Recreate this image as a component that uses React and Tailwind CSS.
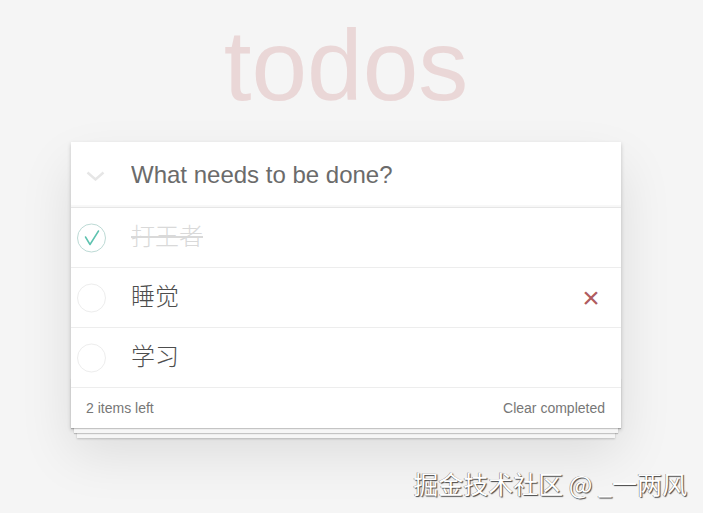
import { useState } from 'react';

const initialTodos = [
    { id: 1, title: '打王者', completed: true },
    { id: 2, title: '睡觉', completed: false },
    { id: 3, title: '学习', completed: false },
];

const Toggle = ({ checked }) => (
    <svg width="40" height="40" viewBox="0 0 40 40" className="shrink-0">
        <circle cx="20.5" cy="20" r="14" fill="none" stroke={checked ? '#bddad5' : '#ededed'} strokeWidth="1" />
        {checked && (
            <path d="M14.5 19 L19 26.5 L27.5 13" fill="none" stroke="#5dc2af" strokeWidth="1.5" strokeLinecap="round" strokeLinejoin="round" />
        )}
    </svg>
);

const TodoItem = ({ todo, hovered, onHover, onToggle, onDestroy }) => (
    <li
        className="relative flex items-center h-[60px] border-b border-[#ededed]"
        onMouseEnter={() => onHover(todo.id)}
    >
        <button type="button" onClick={() => onToggle(todo.id)} className="ml-0 w-[40px] h-[40px] flex items-center">
            <Toggle checked={todo.completed} />
        </button>
        <label
            className={
                'pl-[20px] pr-[15px] text-[24px] leading-[1.2] font-light ' +
                (todo.completed ? 'text-[#d9d9d9] line-through' : 'text-[#4d4d4d]')
            }
        >
            {todo.title}
        </label>
        {hovered && (
            <button
                type="button"
                onClick={() => onDestroy(todo.id)}
                className="absolute right-[10px] top-[10px] w-[40px] h-[40px] flex items-center justify-center text-[30px] leading-none text-[#af5b5e]"
            >
                ×
            </button>
        )}
    </li>
);

export default function App() {
    const [todos, setTodos] = useState(initialTodos);
    const [hoverId, setHoverId] = useState(2);

    const left = todos.filter((t) => !t.completed).length;

    const toggle = (id) => setTodos(todos.map((t) => (t.id === id ? { ...t, completed: !t.completed } : t)));
    const destroy = (id) => setTodos(todos.filter((t) => t.id !== id));

    return (
        <div className="relative min-h-screen h-[513px] overflow-hidden bg-[#f5f5f5] font-['Liberation_Sans','Noto_Sans_CJK_SC',sans-serif] pt-[15px]">
            <h1 className="ml-[71px] w-[550px] text-center text-[100px] leading-none font-thin text-[rgba(175,47,47,0.15)] mb-[27px]">todos</h1>

            <section className="relative ml-[71px] w-[550px] bg-white shadow-[0_2px_4px_0_rgba(0,0,0,0.2),0_25px_50px_0_rgba(0,0,0,0.1)]">
                <header className="relative flex items-center h-[65px] shadow-[inset_0_-2px_1px_rgba(0,0,0,0.03)]">
                    <div className="w-[60px] flex justify-start pl-[15px] pt-[2px]">
                        <svg width="19" height="10" viewBox="0 0 19 10">
                            <polyline points="1.5,1.5 9.5,8.5 17.5,1.5" fill="none" stroke="#e6e6e6" strokeWidth="2.4" />
                        </svg>
                    </div>
                    <input
                        className="flex-1 h-full pr-[16px] text-[24px] font-light text-[#4d4d4d] outline-none placeholder:text-[#6b6b6b]"
                        placeholder="What needs to be done?"
                    />
                </header>

                <ul className="border-t border-[#e6e6e6]" onMouseLeave={() => setHoverId(2)}>
                    {todos.map((todo) => (
                        <TodoItem
                            key={todo.id}
                            todo={todo}
                            hovered={hoverId === todo.id}
                            onHover={setHoverId}
                            onToggle={toggle}
                            onDestroy={destroy}
                        />
                    ))}
                </ul>

                <footer className="relative flex items-center justify-between h-[40px] px-[15px] text-[14px] text-[#777]">
                    <div className="absolute left-0 right-0 bottom-0 h-[50px] overflow-hidden pointer-events-none shadow-[0_1px_1px_rgba(0,0,0,0.2),0_8px_0_-3px_#f6f6f6,0_9px_1px_-3px_rgba(0,0,0,0.2),0_16px_0_-6px_#f6f6f6,0_17px_2px_-6px_rgba(0,0,0,0.2)]" />
                    <span>{left} items left</span>
                    <button type="button" className="relative pr-[1px]" onClick={() => setTodos(todos.filter((t) => !t.completed))}>
                        Clear completed
                    </button>
                </footer>
            </section>

            <div className="absolute right-[16px] bottom-[17px] text-[25px] leading-none text-white font-['Noto_Sans_CJK_SC',sans-serif] [text-shadow:1px_1px_1px_#444,-0.5px_-0.5px_0.5px_#777]">
                掘金技术社区 @ _一两风
            </div>
        </div>
    );
}
